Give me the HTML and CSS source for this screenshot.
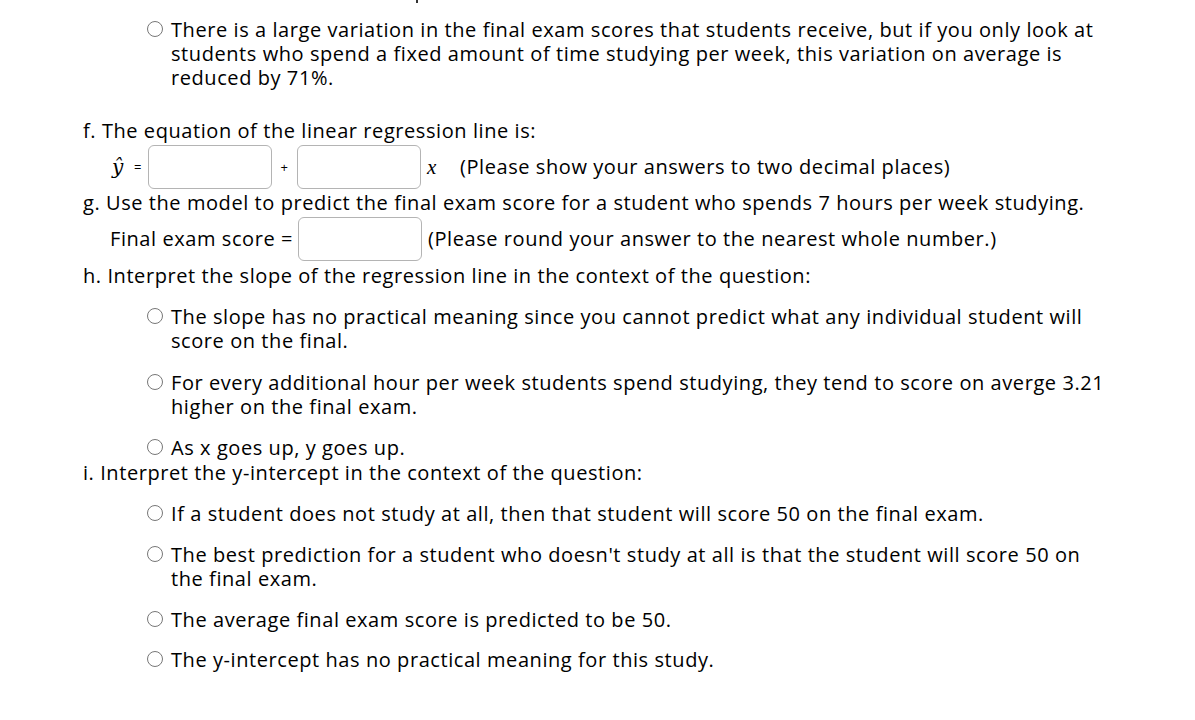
FILE: index.html
```html
<!DOCTYPE html>
<html>
<head>
<meta charset="utf-8">
<link rel="stylesheet" href="styles.css">
</head>
<body>
<div class="page">
  <div class="cutoff"></div>
  <div class="opt first">
    <span class="radio"></span>
    <div class="otext">There is a large variation in the final exam scores that students receive, but if you only look at students who spend a fixed amount of time studying per week, this variation on average is reduced by 71%.</div>
  </div>

  <div class="q qf">f. The equation of the linear regression line is:</div>
  <div class="eqrow">
    <span class="yhat">ŷ</span><span class="small">=</span>
    <span class="box"></span>
    <span class="small plus">+</span>
    <span class="box"></span>
    <span class="xvar">x</span>
    <span class="note">(Please show your answers to two decimal places)</span>
  </div>
  <div class="q qg">g. Use the model to predict the final exam score for a student who spends 7 hours per week studying.</div>
  <div class="eqrow scorerow">
    <span class="lbl">Final exam score =</span>
    <span class="box"></span>
    <span class="note2">(Please round your answer to the nearest whole number.)</span>
  </div>
  <div class="q qh">h. Interpret the slope of the regression line in the context of the question:</div>
  <div class="opt o1">
    <span class="radio"></span>
    <div class="otext">The slope has no practical meaning since you cannot predict what any individual student will score on the final.</div>
  </div>
  <div class="opt o2">
    <span class="radio"></span>
    <div class="otext">For every additional hour per week students spend studying, they tend to score on averge 3.21 higher on the final exam.</div>
  </div>
  <div class="opt o3">
    <span class="radio"></span>
    <div class="otext">As x goes up, y goes up.</div>
  </div>
  <div class="q qi">i. Interpret the y-intercept in the context of the question:</div>
  <div class="opt o4">
    <span class="radio"></span>
    <div class="otext">If a student does not study at all, then that student will score 50 on the final exam.</div>
  </div>
  <div class="opt o5">
    <span class="radio"></span>
    <div class="otext">The best prediction for a student who doesn't study at all is that the student will score 50 on the final exam.</div>
  </div>
  <div class="opt o6">
    <span class="radio"></span>
    <div class="otext">The average final exam score is predicted to be 50.</div>
  </div>
  <div class="opt o7">
    <span class="radio"></span>
    <div class="otext">The y-intercept has no practical meaning for this study.</div>
  </div>
</div>
</body>
</html>
```
FILE: styles.css
```css
html, body {
  margin: 0;
  padding: 0;
  background: #fff;
}
body {
  font-family: "Open Sans", "DejaVu Sans", sans-serif;
  font-size: 20px;
  letter-spacing: 0.57px;
  line-height: 24px;
  color: #000;
}
.page {
  padding: 0 0 0 83px;
  width: 1030px;
}
.cutoff {
  width: 2px;
  height: 3px;
  margin-left: 333px;
  margin-bottom: 15px;
  background: #333;
}
.opt {
  display: flex;
  align-items: flex-start;
  padding-left: 64px;
}
.radio {
  flex: none;
  width: 14px;
  height: 14px;
  border: 1.5px solid #777;
  border-radius: 50%;
  margin-top: 3px;
  margin-right: 8px;
  box-sizing: content-box;
}
.otext {
  width: 940px;
}
.qf { margin-top: 29px; }
.eqrow {
  display: flex;
  align-items: center;
  height: 48px;
  padding-left: 29px;
}
.yhat {
  font-family: "DejaVu Serif", serif;
  font-style: italic;
  width: 22px;
}
.small {
  font-size: 13px;
  width: 14px;
}
.plus {
  width: 25px;
  text-align: center;
}
.box {
  width: 124px;
  height: 44px;
  border: 1px solid #b4b4b4;
  border-radius: 6px;
  box-sizing: border-box;
}
.xvar {
  font-family: "Liberation Serif", serif;
  font-style: italic;
  font-size: 21px;
  letter-spacing: 0;
  margin-left: 6px;
  width: 33px;
}
.qg { margin-top: 0; }
.scorerow { padding-left: 27px; }
.lbl { width: 188px; }
.note2 { margin-left: 6px; }
.qh { margin-top: 1px; }
.o1 { margin-top: 17px; }
.o2 { margin-top: 18px; }
.o3 { margin-top: 17px; }
.qi { margin-top: 1px; }
.o4 { margin-top: 17px; }
.o5 { margin-top: 17px; }
.o6 { margin-top: 17px; }
.o7 { margin-top: 16px; }
```
